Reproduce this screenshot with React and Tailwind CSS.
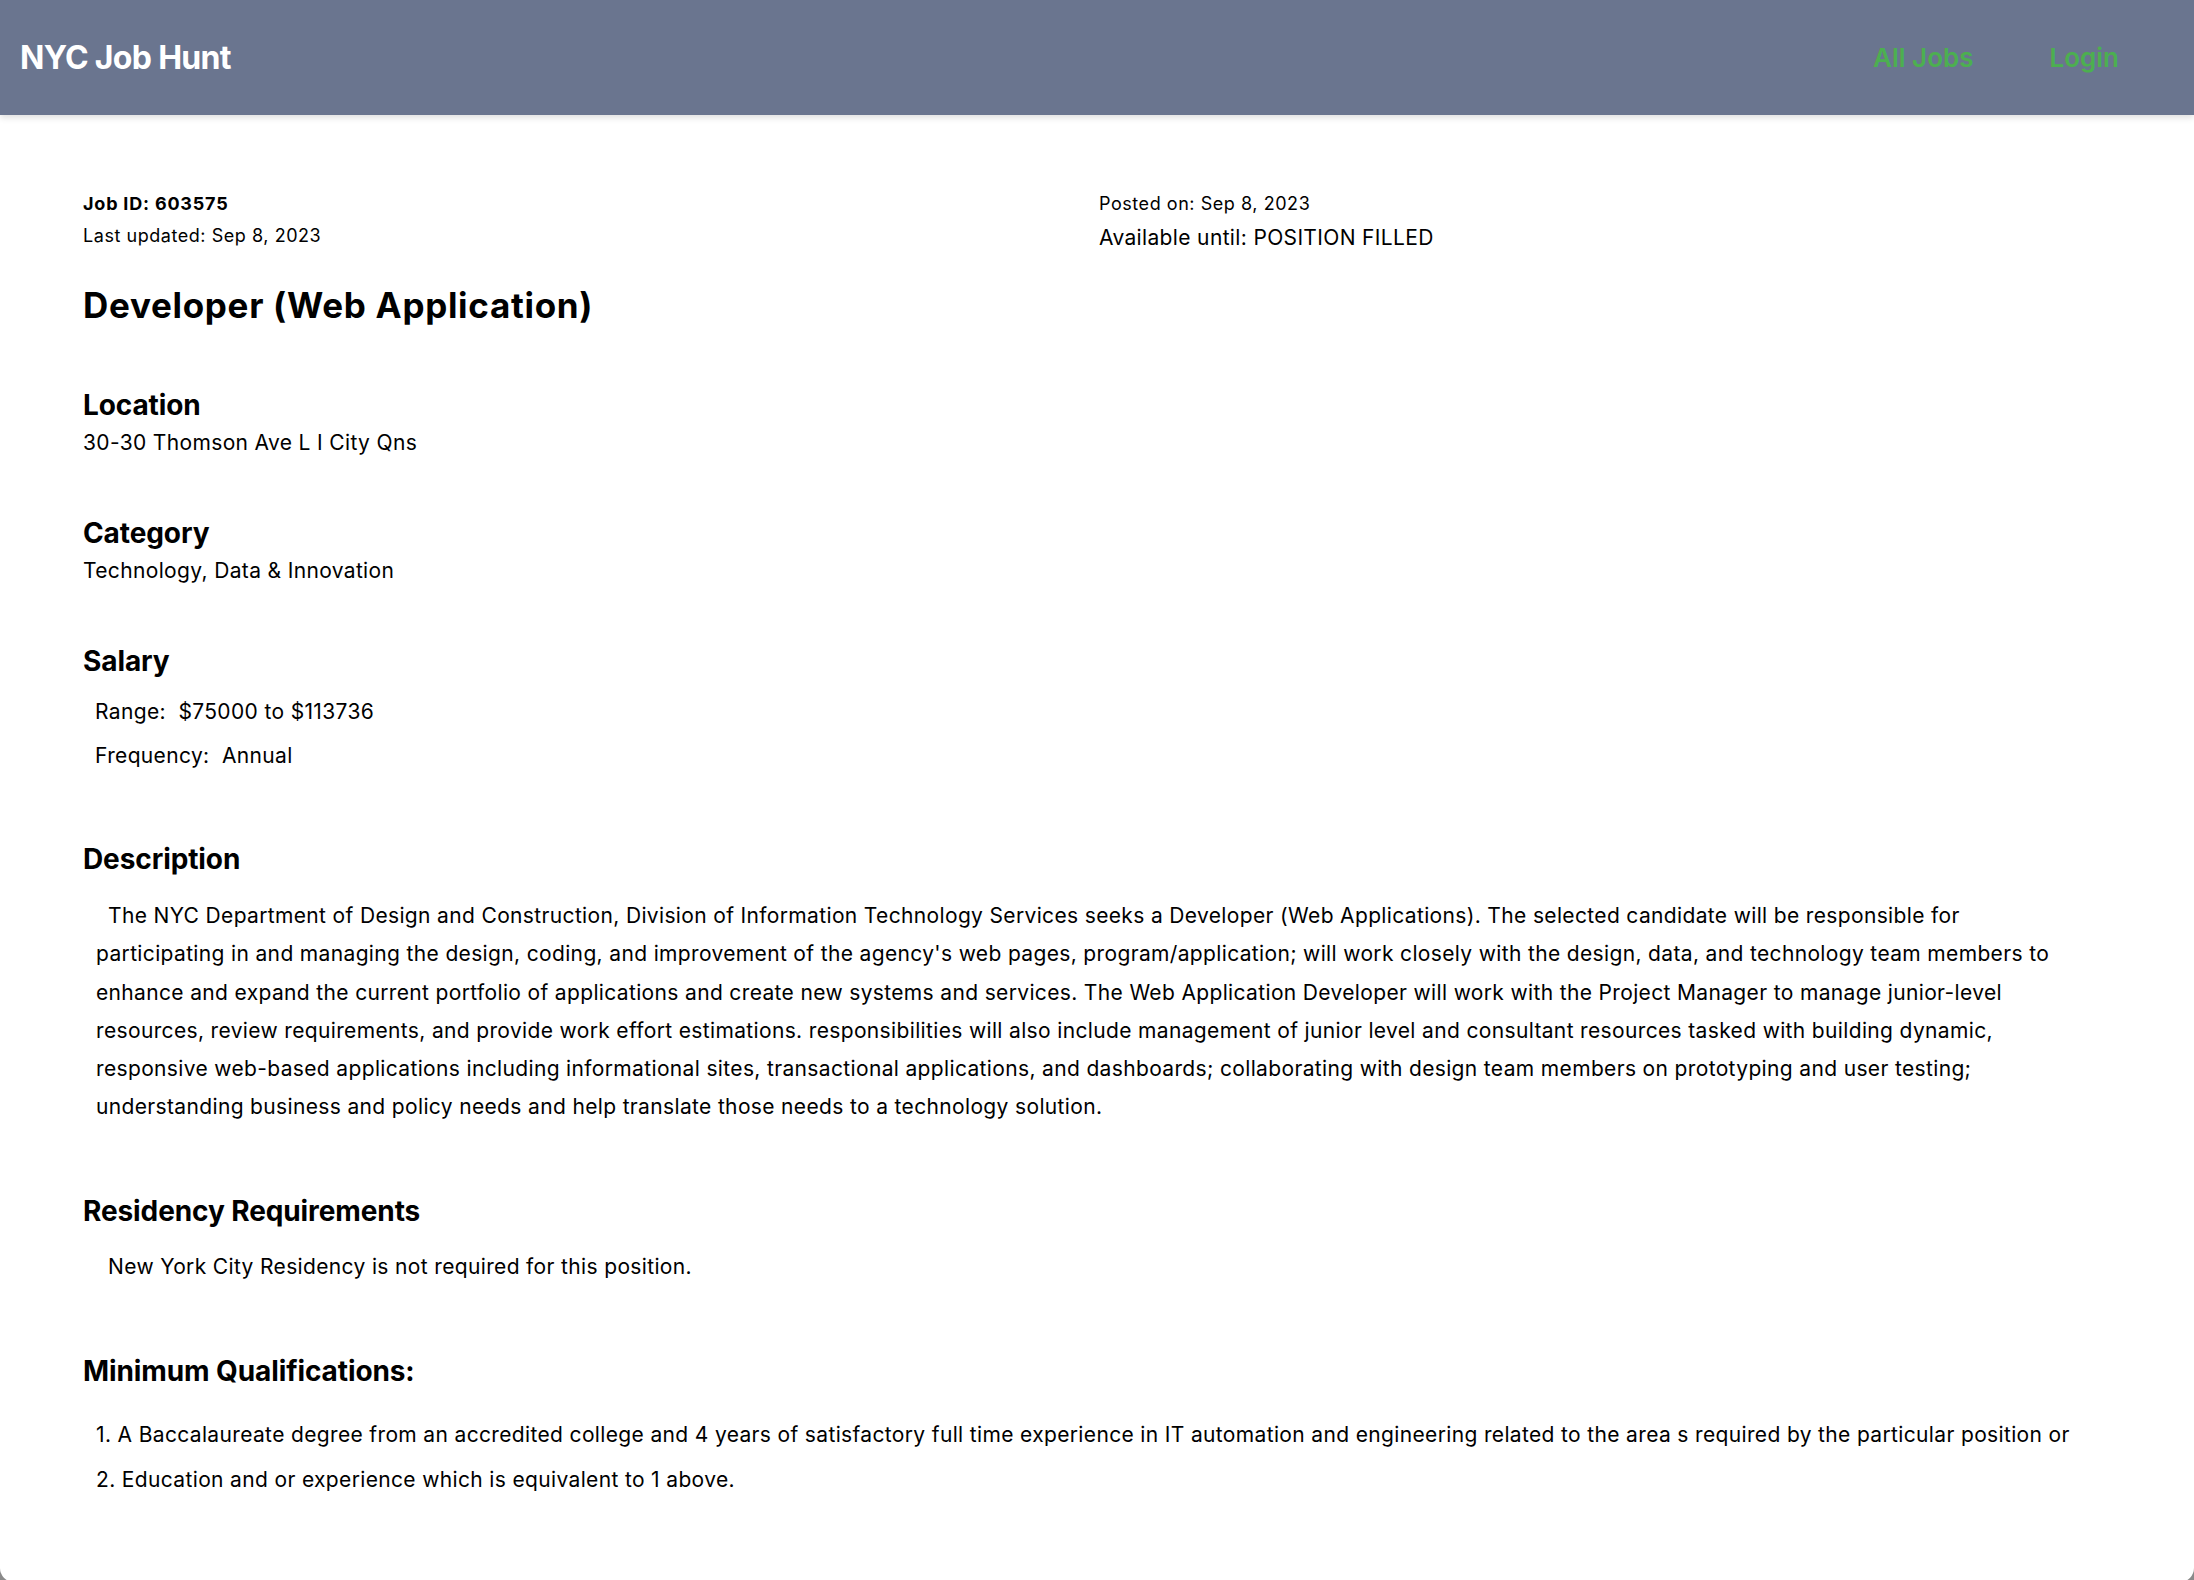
const DESCRIPTION =
  "The NYC Department of Design and Construction, Division of Information Technology Services seeks a Developer (Web Applications). The selected candidate will be responsible for participating in and managing the design, coding, and improvement of the agency's web pages, program/application; will work closely with the design, data, and technology team members to enhance and expand the current portfolio of applications and create new systems and services. The Web Application Developer will work with the Project Manager to manage junior-level resources, review requirements, and provide work effort estimations. responsibilities will also include management of junior level and consultant resources tasked with building dynamic, responsive web-based applications including informational sites, transactional applications, and dashboards; collaborating with design team members on prototyping and user testing; understanding business and policy needs and help translate those needs to a technology solution."

const QUALIFICATIONS = [
  'A Baccalaureate degree from an accredited college and 4 years of satisfactory full time experience in IT automation and engineering related to the area s required by the particular position or',
  'Education and or experience which is equivalent to 1 above.',
]

const Heading = ({ children }) => (
  <h3 className="text-[28px] leading-[34px] font-bold tracking-[-0.1px]">{children}</h3>
)

const Navbar = () => (
  <header className="h-[115px] bg-[#6a758f] shadow-[0_3px_6px_rgba(0,0,0,0.12)] flex items-center justify-between pl-[20px] pr-[75px] relative z-10 tracking-normal">
    <h1 className="text-white text-[32px] font-bold tracking-[-0.7px]">NYC Job Hunt</h1>
    <nav className="flex items-center gap-[76px] text-[26px] font-semibold text-[#4caf50]">
      <a href="#">All Jobs</a>
      <a href="#">Login</a>
    </nav>
  </header>
)

const App = () => {
  return (
    <div className="min-h-[1580px] bg-[#8a8a8a] font-['Inter',sans-serif] text-black tracking-[0.35px]">
      <div className="min-h-[1580px] bg-white rounded-b-[14px] overflow-hidden">
        <Navbar />

        <main className="pl-[83px] pr-[79px] pt-[73px] pb-20">
          {/* meta info */}
          <div className="grid grid-cols-2">
            <div className="text-[18px] leading-[32px] tracking-[0.55px]">
              <p className="font-bold tracking-[0.8px]">Job ID: 603575</p>
              <p>Last updated: Sep 8, 2023</p>
            </div>
            <div>
              <p className="text-[18px] leading-[32px] tracking-[0.55px]">Posted on: Sep 8, 2023</p>
              <p className="text-[21px] leading-[36px]">Available until: POSITION FILLED</p>
            </div>
          </div>

          <h2 className="mt-[28px] text-[35px] leading-[42px] font-bold tracking-[0.7px]">Developer (Web Application)</h2>

          <section className="mt-[62px]">
            <Heading>Location</Heading>
            <p className="mt-[5px] text-[21px] leading-[32px]">30-30 Thomson Ave L I City Qns</p>
          </section>

          <section className="mt-[57px]">
            <Heading>Category</Heading>
            <p className="mt-[5px] text-[21px] leading-[32px]">Technology, Data &amp; Innovation</p>
          </section>

          <section className="mt-[57px]">
            <Heading>Salary</Heading>
            <div className="mt-[12px] pl-[12px] text-[21px] leading-[44px]">
              <p>Range:&nbsp; $75000 to $113736</p>
              <p>Frequency:&nbsp; Annual</p>
            </div>
          </section>

          <section className="mt-[64px]">
            <Heading>Description</Heading>
            <p className="mt-[21px] pl-[13px] pr-[40px] indent-[12px] text-[21px] leading-[38.3px]">{DESCRIPTION}</p>
          </section>

          <section className="mt-[67px]">
            <Heading>Residency Requirements</Heading>
            <p className="mt-[20px] pl-[13px] indent-[12px] text-[21px] leading-[38.3px]">
              New York City Residency is not required for this position.
            </p>
          </section>

          <section className="mt-[68px]">
            <Heading>Minimum Qualifications:</Heading>
            <ol className="mt-[24px] pl-[13px] text-[21px] leading-[45px]">
              {QUALIFICATIONS.map((q, i) => (
                <li key={i}>{i + 1}. {q}</li>
              ))}
            </ol>
          </section>
        </main>
      </div>
    </div>
  )
}

export default App
